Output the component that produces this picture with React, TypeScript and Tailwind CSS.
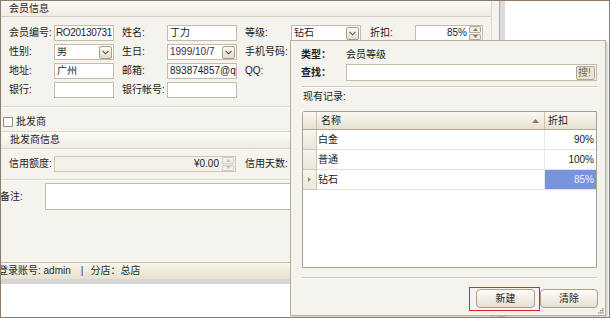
import React from "react";

// small dropdown button used by the combo boxes
const DropBtn = () => (
  <span className="w-[13px] h-[13px] mr-px shrink-0 border border-[#a99c86] rounded-[2px] bg-linear-to-b from-[#fcfbf8] to-[#e2dbcc] flex items-center justify-center">
    <svg width="7" height="5" viewBox="0 0 7 5">
      <path d="M0.5 0.8 L3.5 3.8 L6.5 0.8" stroke="#5b4f41" strokeWidth="1.1" fill="none" />
    </svg>
  </span>
);

const Spin = ({ faded }: { faded?: boolean }) => (
  <span className="w-[12px] h-[14px] mr-px shrink-0 flex flex-col gap-px">
    <span className={`flex-1 border rounded-[1px] flex items-center justify-center ${faded ? "border-[#d4ccbe] bg-[#f3f0ea]" : "border-[#b4a893] bg-[#f1ece2]"}`}>
      <svg width="5" height="3" viewBox="0 0 5 3">
        <path d="M0 3 L2.5 0 L5 3Z" fill={faded ? "#c9c1b4" : "#8a7d6b"} />
      </svg>
    </span>
    <span className={`flex-1 border rounded-[1px] flex items-center justify-center ${faded ? "border-[#d4ccbe] bg-[#f3f0ea]" : "border-[#b4a893] bg-[#f1ece2]"}`}>
      <svg width="5" height="3" viewBox="0 0 5 3">
        <path d="M0 0 L2.5 3 L5 0Z" fill={faded ? "#c9c1b4" : "#8a7d6b"} />
      </svg>
    </span>
  </span>
);

const Input = ({ className = "", children }: { className?: string; children?: React.ReactNode }) => (
  <div className={`h-[16px] border border-[#c6bba8] bg-white flex items-center pl-[2px] overflow-hidden whitespace-nowrap ${className}`}>
    {children}
  </div>
);

const Combo = ({ className = "", value, valueClass = "" }: { className?: string; value: string; valueClass?: string }) => (
  <div className={`h-[16px] border border-[#c6bba8] bg-white flex items-center ${className}`}>
    <span className={`flex-1 pl-[2px] overflow-hidden whitespace-nowrap ${valueClass}`}>{value}</span>
    <DropBtn />
  </div>
);

const grid = [
  { name: "白金", rate: "90%" },
  { name: "普通", rate: "100%" },
  { name: "钻石", rate: "85%", current: true },
];

export default function App() {
  return (
    <div className="w-[610px] h-[318px] relative overflow-hidden border border-[#8e7b6a] bg-white flex text-[10px] leading-none text-[#1c1c1c] font-['Liberation_Sans','Noto_Sans_CJK_SC',sans-serif]">
      {/* member form */}
      <div className="w-[498px] h-full bg-[#f5f3ee] flex shrink-0">
        <div className="w-[491px] h-full flex flex-col border-r border-[#ddd6c9]">
          <div className="h-[16px] shrink-0 flex items-center pl-[8px] border-b border-[#d6cfc2] bg-linear-to-b from-[#fdfcfa] to-[#efebe3]">
            会员信息
          </div>

          <div className="mt-[8px] flex flex-col gap-[3px] pl-[8px]">
            <div className="flex items-center h-[16px]">
              <span className="w-[45px]">会员编号:</span>
              <Input className="w-[60px] tracking-[-0.35px] pl-px">RO20130731</Input>
              <span className="ml-[8px] w-[45px]">姓名:</span>
              <Input className="w-[70px]">丁力</Input>
              <span className="ml-[8px] w-[46px]">等级:</span>
              <Combo className="w-[70px]" value="钻石" />
              <span className="ml-[9px] w-[45px]">折扣:</span>
              <div className="w-[68px] h-[16px] border border-[#c6bba8] bg-white flex items-center">
                <span className="flex-1 text-right pr-[2px]">85%</span>
                <Spin />
              </div>
            </div>
            <div className="flex items-center h-[16px]">
              <span className="w-[45px]">性别:</span>
              <Combo className="w-[60px]" value="男" />
              <span className="ml-[8px] w-[45px]">生日:</span>
              <Combo className="w-[70px]" value="1999/10/7" valueClass="text-[#4a2446]" />
              <span className="ml-[8px] w-[46px]">手机号码:</span>
              <Input className="w-[70px]" />
            </div>
            <div className="flex items-center h-[16px]">
              <span className="w-[45px]">地址:</span>
              <Input className="w-[60px]">广州</Input>
              <span className="ml-[8px] w-[45px]">邮箱:</span>
              <Input className="w-[70px]">893874857@qq</Input>
              <span className="ml-[8px] w-[46px]">QQ:</span>
              <Input className="w-[70px]" />
            </div>
            <div className="flex items-center h-[16px]">
              <span className="w-[45px]">银行:</span>
              <Input className="w-[60px]" />
              <span className="ml-[8px] w-[45px]">银行帐号:</span>
              <Input className="w-[70px]" />
            </div>
          </div>

          <div className="mt-[8px] h-[2px] shrink-0 border-t border-[#dcd5c8] border-b border-b-white" />

          <div className="h-[23px] shrink-0 pt-[5px] flex items-center pl-[2px]">
            <span className="w-[10px] h-[10px] border border-[#9c8f7c] bg-white mr-[3px]" />
            批发商
          </div>

          <div className="h-[18px] shrink-0 flex items-center pl-[9px] border-y border-[#ddd6c9] bg-linear-to-b from-[#fdfcfa] to-[#efebe3]">
            批发商信息
          </div>

          <div className="mt-[7px] flex items-center h-[16px] pl-[8px]">
            <span className="w-[45px]">信用额度:</span>
            <div className="w-[182px] h-[16px] border border-[#d0c7b8] bg-[#f3f0ea] flex items-center">
              <span className="flex-1 text-right pr-[3px]">¥0.00</span>
              <Spin faded />
            </div>
            <span className="ml-[9px] w-[45px]">信用天数:</span>
            <Input className="w-[70px]" />
          </div>

          <div className="mt-[7px] h-[2px] shrink-0 border-t border-[#dcd5c8] border-b border-b-white" />

          <div className="mt-[2px] flex items-center h-[27px]">
            <span className="-ml-px w-[45px]">备注:</span>
            <div className="flex-1 h-[27px] border border-[#c6bba8] bg-white" />
          </div>

          <div className="flex-1" />

          <div className="h-[17px] shrink-0 flex items-center border-t border-[#c9bfac] bg-linear-to-b from-[#f8f5ec] to-[#e8e1cd] text-[#2a2a2a] whitespace-nowrap">
            <span className="-ml-[3px]">登录账号: admin</span>
            <span className="ml-[10px]">|</span>
            <span className="ml-[7px]">分店：总店</span>
          </div>
          <div className="h-[5px] shrink-0 bg-[#d7d5d3]" />
          <div className="h-[33px] shrink-0 bg-white" />
        </div>
      </div>

      <div className="w-px h-full bg-[#b3aea6] shrink-0" />
      <div className="w-[5px] h-full bg-[#dddbd8] shrink-0" />
      <div className="flex-1 h-full bg-white" />

      {/* level lookup dropdown */}
      <div className="absolute left-[289px] top-[39px] w-[316px] h-[276px] border border-[#b9ae9c] bg-[#f5f3ee] shadow-[2px_2px_2px_rgba(0,0,0,0.18)] flex flex-col">
        <div className="mt-[6px] h-[16px] flex items-center pl-[10px]">
          <span className="w-[45px] font-bold">类型：</span>
          <span>会员等级</span>
        </div>
        <div className="mt-px h-[17px] flex items-center pl-[10px]">
          <span className="w-[45px] font-bold">查找：</span>
          <div className="w-[251px] h-[17px] border border-[#c6bba8] bg-white flex items-center justify-end">
            <span className="w-[19px] h-[14px] mr-px border border-[#b0a48f] rounded-[2px] bg-[#ebe5da] text-[#6f6453] flex items-center justify-start pl-px overflow-hidden whitespace-nowrap">
              搜!
            </span>
          </div>
        </div>

        <div className="mt-[5px] ml-[11px] w-[295px] h-[2px] border-t border-[#d3cab9] border-b border-b-white" />

        <div className="mt-[2px] h-[14px] flex items-center pl-[12px]">现有记录:</div>

        <div className="mt-[7px] ml-[11px] w-[295px] h-[157px] border border-[#a99f8e] rounded-tl-[3px] bg-white flex flex-col">
          <div className="h-[18px] flex border-b border-[#b4a993] bg-linear-to-b from-[#fbf9f3] to-[#e8e1d1]">
            <span className="w-[14px] border-r border-[#cbc1ae]" />
            <span className="w-[228px] border-r border-[#cbc1ae] flex items-center pl-[4px] pr-[5px] justify-between">
              名称
              <svg width="7" height="4" viewBox="0 0 7 4">
                <path d="M0 4 L3.5 0 L7 4Z" fill="#8d7e6c" />
              </svg>
            </span>
            <span className="w-[51px] flex items-center pl-[3px]">折扣</span>
          </div>
          {grid.map((r) => (
            <div key={r.name} className="h-[20px] flex border-b border-[#e7e3db]">
              <span className="w-[14px] border-r border-b border-[#cfc6b5] -mb-px bg-linear-to-b from-[#f8f5ee] to-[#ebe6da] flex items-center justify-center">
                {r.current && (
                  <svg width="3" height="5" viewBox="0 0 3 5">
                    <path d="M0 0 L3 2.5 L0 5Z" fill="#9a8871" />
                  </svg>
                )}
              </span>
              <span className="w-[228px] border-r border-[#ece9e3] flex items-center pl-px">{r.name}</span>
              <span className={`w-[51px] flex items-center justify-end pr-[2px] ${r.current ? "bg-[#7894db] text-[#eef2fc]" : ""}`}>
                {r.rate}
              </span>
            </div>
          ))}
        </div>

        <div className="mt-[9px] ml-[11px] w-[295px] h-[2px] border-t border-[#d3cab9] border-b border-b-white" />

        <div className="mt-[10px] h-[19px] flex justify-end gap-[5px] pr-[7px]">
          <div className="relative">
            <span className="absolute left-[-7px] top-[-2px] w-[71px] h-[24px] border border-[#e0262a]" />
            <button className="w-[59px] h-[19px] border border-[#ad9f88] rounded-[4px] bg-linear-to-b from-[#fefdfb] to-[#e7e0d0] flex items-center justify-center">
              新建
            </button>
          </div>
          <button className="w-[58px] h-[19px] border border-[#ad9f88] rounded-[4px] bg-linear-to-b from-[#fefdfb] to-[#e7e0d0] flex items-center justify-center">
            清除
          </button>
        </div>

        <svg className="absolute right-px bottom-px" width="7" height="7" viewBox="0 0 7 7">
          <rect x="5" y="1" width="1.5" height="1.5" fill="#a89d8c" />
          <rect x="3" y="3" width="1.5" height="1.5" fill="#a89d8c" />
          <rect x="5" y="3" width="1.5" height="1.5" fill="#a89d8c" />
          <rect x="1" y="5" width="1.5" height="1.5" fill="#a89d8c" />
          <rect x="3" y="5" width="1.5" height="1.5" fill="#a89d8c" />
          <rect x="5" y="5" width="1.5" height="1.5" fill="#a89d8c" />
        </svg>
      </div>
    </div>
  );
}
